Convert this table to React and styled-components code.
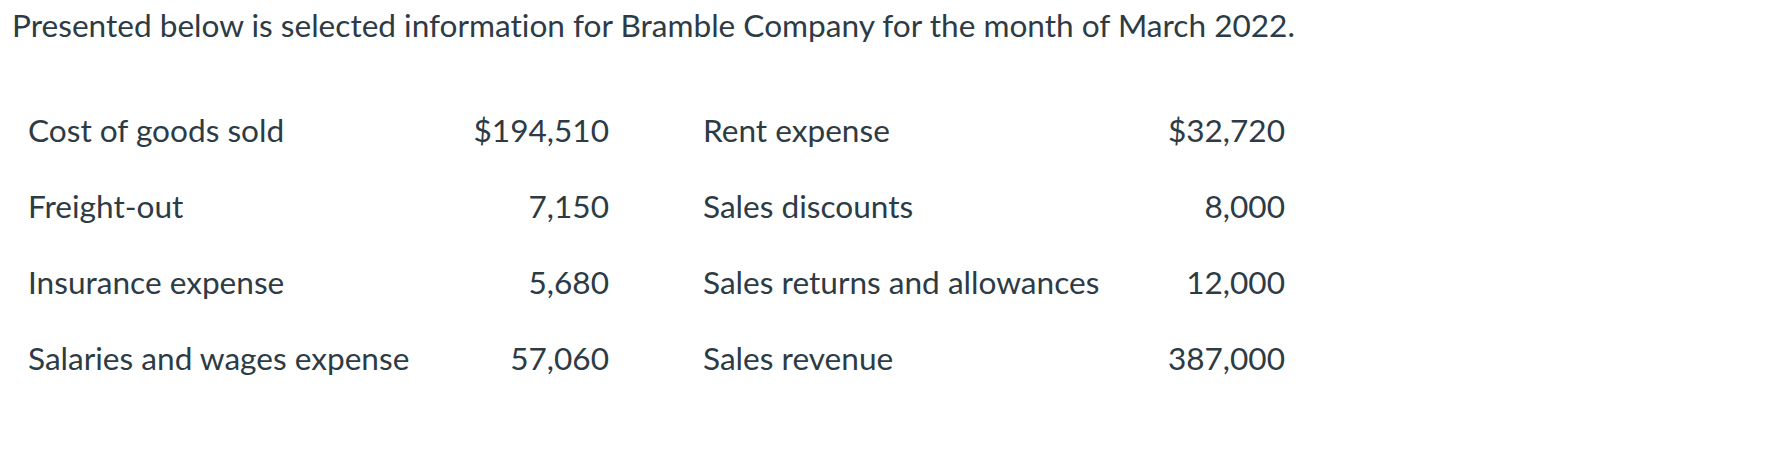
import React from "react";
import styled, { createGlobalStyle } from "styled-components";

const Global = createGlobalStyle`
  html, body { margin: 0; padding: 0; background: #ffffff; }
  body {
    font-family: Lato, "Noto Sans", sans-serif;
    color: #2d3b45;
    font-variant-ligatures: none;
  }
`;

const Page = styled.div`
  padding: 7px 12px;
`;

const Intro = styled.p`
  margin: 0;
  font-size: 31.6px;
  line-height: 36px;
`;

const Table = styled.div`
  display: grid;
  grid-template-columns: 420px 161px 515px 161px;
  margin: 49px 0 0 16px;
`;

const Label = styled.div`
  font-size: 31.6px;
  line-height: 76px;
  white-space: nowrap;
  padding-left: ${(p) => (p.$second ? "94px" : "0")};
`;

const Amount = styled.div`
  font-size: 31.6px;
  line-height: 76px;
  text-align: right;
  white-space: nowrap;
`;

const rows = [
  ["Cost of goods sold", "$194,510", "Rent expense", "$32,720"],
  ["Freight-out", "7,150", "Sales discounts", "8,000"],
  ["Insurance expense", "5,680", "Sales returns and allowances", "12,000"],
  ["Salaries and wages expense", "57,060", "Sales revenue", "387,000"],
];

export default function App() {
  return (
    <Page>
      <Global />
      <Intro>
        Presented below is selected information for Bramble Company for the month of March 2022.
      </Intro>
      <Table>
        {rows.map((r) => (
          <React.Fragment key={r[0]}>
            <Label>{r[0]}</Label>
            <Amount>{r[1]}</Amount>
            <Label $second>{r[2]}</Label>
            <Amount>{r[3]}</Amount>
          </React.Fragment>
        ))}
      </Table>
    </Page>
  );
}
